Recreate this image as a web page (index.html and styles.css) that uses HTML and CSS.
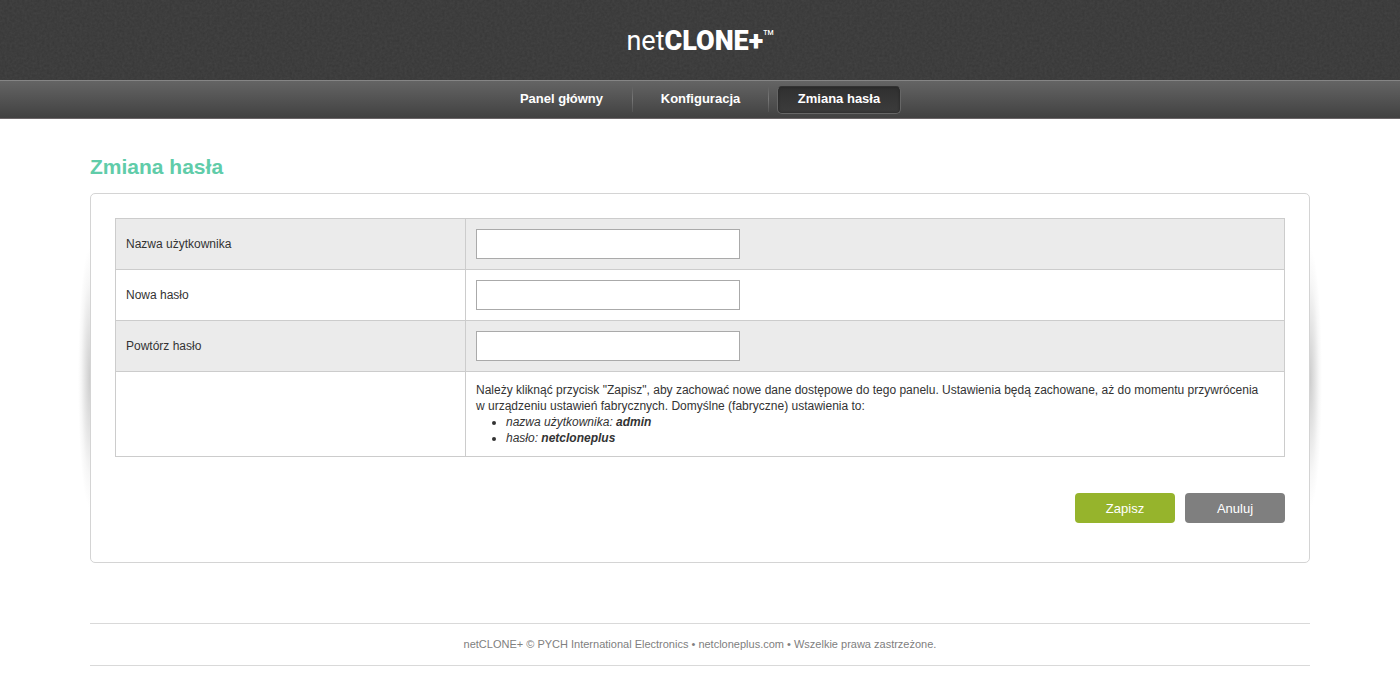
FILE: index.html
```html
<!DOCTYPE html>
<html lang="pl">
<head>
<meta charset="utf-8">
<title>netCLONE+ - Zmiana hasła</title>
<link rel="stylesheet" href="styles.css">
</head>
<body>
<header class="header">
  <svg class="grain" aria-hidden="true">
    <filter id="noise" x="0" y="0" width="100%" height="100%">
      <feTurbulence type="fractalNoise" baseFrequency="0.4" numOctaves="2" seed="4"/>
      <feColorMatrix values="0 0 0 0 0  0 0 0 0 0  0 0 0 0 0  1 0 0 0 -0.2"/>
    </filter>
    <rect width="100%" height="100%" filter="url(#noise)"/>
  </svg>
  <div class="logo"><span class="logo-net">net</span><span class="logo-clone">CLONE+</span><span class="logo-tm">TM</span></div>
</header>
<nav class="nav">
  <ul class="menu">
    <li class="menu-item menu-item-first"><a class="menu-link" href="#">Panel główny</a></li>
    <li class="menu-item"><a class="menu-link" href="#">Konfiguracja</a></li>
    <li class="menu-item menu-item-active"><a class="menu-link menu-link-active" href="#" aria-current="page">Zmiana hasła</a></li>
  </ul>
</nav>
<main class="container">
  <h1 class="title">Zmiana hasła</h1>
  <form class="panel">
    <table class="fields">
      <tbody>
        <tr class="row shaded"><td class="cell label-cell"><label for="user">Nazwa użytkownika</label></td><td class="cell"><input class="input" id="user" type="text"></td></tr>
        <tr class="row"><td class="cell label-cell"><label for="pass">Nowa hasło</label></td><td class="cell"><input class="input" id="pass" type="password"></td></tr>
        <tr class="row shaded"><td class="cell label-cell"><label for="pass2">Powtórz hasło</label></td><td class="cell"><input class="input" id="pass2" type="password"></td></tr>
        <tr class="row"><td class="cell label-cell"></td><td class="cell">Należy kliknąć przycisk "Zapisz", aby zachować nowe dane dostępowe do tego panelu. Ustawienia będą zachowane, aż do momentu przywrócenia w&nbsp;urządzeniu ustawień fabrycznych. Domyślne (fabryczne) ustawienia to:
          <ul class="defaults">
            <li>nazwa użytkownika: <b>admin</b></li>
            <li>hasło: <b>netcloneplus</b></li>
          </ul>
        </td></tr>
      </tbody>
    </table>
    <div class="actions">
      <button class="button save" type="submit">Zapisz</button>
      <button class="button cancel" type="reset">Anuluj</button>
    </div>
  </form>
  <footer class="footer">netCLONE+ © PYCH International Electronics • netcloneplus.com • Wszelkie prawa zastrzeżone.</footer>
</main>
</body>
</html>
```
FILE: styles.css
```css
* { box-sizing: border-box; }
body {
  margin: 0;
  background: #fff;
  color: #333;
  font: 12px/16px "Liberation Sans", Arial, sans-serif;
}
.header {
  position: relative;
  display: flex;
  justify-content: center;
  height: 80px;
  padding-top: 25px;
  background: #424242;
}
.grain {
  position: absolute;
  inset: 0;
  width: 100%;
  height: 100%;
  opacity: 0.22;
}
.logo {
  position: relative;
  display: flex;
  align-items: flex-start;
  color: #fff;
  font: 27px/32px Roboto, sans-serif;
}
.logo-net { font-weight: 400; }
.logo-clone { font-weight: 900; }
.logo-tm { font-size: 7px; line-height: 16px; font-weight: 500; }
.nav {
  display: flex;
  justify-content: center;
  height: 39px;
  border-top: 1px solid #858585;
  border-bottom: 1px solid #6b6668;
  background: linear-gradient(#646464, #414141);
}
.menu {
  display: flex;
  align-items: flex-start;
  margin: 0;
  padding: 5px 0 0;
  list-style: none;
}
.menu-item {
  min-width: 136px;
  border-right: 1px solid;
  border-image: linear-gradient(#5c5c5c, #777, #505050) 1;
  text-align: center;
}
.menu-item-first { min-width: 142px; }
.menu-item-active {
  padding: 0 8px;
  border: 0;
}
.menu-link {
  display: block;
  color: #fff;
  font-size: 13px;
  font-weight: bold;
  line-height: 26px;
  text-decoration: none;
}
.menu-link-active {
  min-width: 124px;
  padding-bottom: 2px;
  line-height: 24px;
  border: 1px solid #666;
  border-top-color: #333;
  border-radius: 5px;
  background: linear-gradient(#303030, #3c3c3c);
  box-shadow: inset 0 0 3px #222;
}
.container {
  max-width: 1220px;
  margin: 0 auto;
}
.title {
  margin: 0;
  padding: 36px 0 14px;
  color: #60cca9;
  font-size: 21px;
  line-height: 24px;
}
.panel {
  position: relative;
  padding: 24px 24px 39px;
  border: 1px solid #d4d4d4;
  border-radius: 5px;
  background: #fff;
}
.panel::before,
.panel::after {
  content: "";
  position: absolute;
  top: 50%;
  width: 12px;
  height: 260px;
  transform: translateY(-50%);
}
.panel::before {
  right: 100%;
  margin-right: 1px;
  background: radial-gradient(ellipse 12px 130px at right, #cdcdcd, #e3e3e3 40%, #f7f7f7 75%, #fff);
}
.panel::after {
  left: 100%;
  margin-left: 1px;
  background: radial-gradient(ellipse 12px 130px at left, #cdcdcd, #e3e3e3 40%, #f7f7f7 75%, #fff);
}
.fields {
  width: 100%;
  border-collapse: collapse;
}
.cell {
  padding: 10px;
  border: 1px solid #ccc;
}
.label-cell { width: 350px; }
.shaded { background: #ebebeb; }
.input {
  display: block;
  width: 264px;
  height: 30px;
  padding: 0 8px;
  border: 1px solid #aaa;
  background: #fff;
  font: inherit;
}
.defaults {
  margin: 0;
  padding-left: 30px;
  font-style: italic;
}
.actions {
  display: flex;
  justify-content: flex-end;
  gap: 10px;
  margin-top: 36px;
}
.button {
  width: 100px;
  height: 30px;
  padding: 1px 0 0;
  border: 0;
  border-radius: 4px;
  color: #fff;
  font: 13px/29px "Liberation Sans", Arial, sans-serif;
}
.save { background: #96b42c; }
.cancel { background: #7f7f7f; }
.footer {
  margin: 60px 0 29px;
  padding: 12px 0;
  border: solid #d9d9d9;
  border-width: 1px 0;
  color: #808080;
  font-size: 11px;
  line-height: 17px;
  text-align: center;
}
```
